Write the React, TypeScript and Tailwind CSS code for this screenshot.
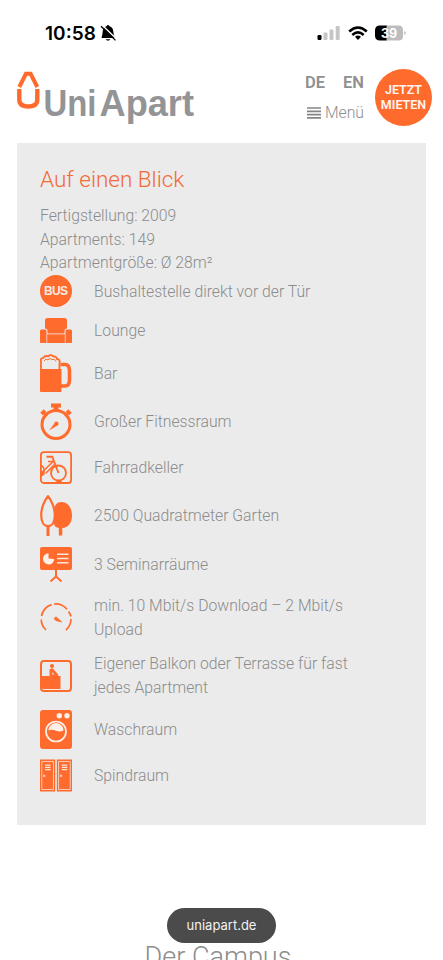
import type { ReactNode } from "react";

const BusIcon = () => (
  <svg viewBox="0 0 32 32" className="h-8 w-8">
    <circle cx="16" cy="16" r="16" fill="#ff6b2c" />
    <text
      x="16"
      y="20.4"
      textAnchor="middle"
      textLength="24"
      className="fill-[#f7eae4] font-['Liberation_Sans',sans-serif] text-[12px] font-bold"
    >
      BUS
    </text>
  </svg>
);

const LoungeIcon = () => (
  <svg viewBox="0 0 32 25" className="h-[25px] w-8" fill="#ff6b2c">
    <path d="M5 10.500V2.500Q5 0 7.500 0H24.500Q27 0 27 2.500V10.500Q24.500 10.500 24.500 12.500V15.500H7.500V12.500Q7.500 10.500 5 10.500Z" />
    <path d="M0 13Q0 11.500 1.500 11.500H5Q6.500 11.500 6.500 13V25H0.800Q0 25 0 24.200Z" />
    <path d="M32 13Q32 11.500 30.500 11.500H27Q25.500 11.500 25.500 13V25H31.200Q32 25 32 24.200Z" />
    <path d="M7.200 16.300H24.800V25H7.200Z" />
  </svg>
);

const BarIcon = () => (
  <svg viewBox="0 0 32 38" className="h-[38px] w-8" fill="none" stroke="#ff6b2c">
    <path
      d="M1 16V7.500Q0 4 3.500 3.800Q5 1 8 2.500Q11-0.500 13.500 2.600Q16.500 2 17 5Q20.500 5.500 19.500 9V16"
      strokeWidth="1.800"
    />
    <path d="M4 7Q6 3.500 8 6Q9 3 12 5.500Q15 4.500 16 7.500" strokeWidth="1" />
    <path d="M20.500 10.500H25Q29.500 10.500 29.500 17V26Q29.500 32 25 32H20.500" strokeWidth="3.600" />
    <path d="M0 15H21.500V37Q21.500 38 20.500 38H1Q0 38 0 37Z" fill="#ff6b2c" stroke="none" />
  </svg>
);

const StopwatchIcon = () => (
  <svg viewBox="0 0 32 37" className="h-[37px] w-8" fill="none" stroke="#ff6b2c">
    <circle cx="16" cy="21.500" r="14" strokeWidth="3" />
    <path d="M11 0.500H21V4.500H18.500V8H13.500V4.500H11Z" fill="#ff6b2c" stroke="none" />
    <path d="M1.500 11L5 7.500M30.500 11L27 7.500" strokeWidth="3.600" />
    <path d="M3 9L7 13M29 9L25 13" strokeWidth="2" />
    <path d="M9 27.500L14.200 20.700A2.200 2.200 0 1 1 16.600 23Z" fill="#ff6b2c" stroke="none" />
  </svg>
);

const BikeIcon = () => (
  <svg viewBox="0 0 32 33" className="h-[33px] w-8" fill="none" stroke="#ff6b2c">
    <rect x="0.900" y="1.200" width="30.200" height="30.800" rx="3" strokeWidth="1.800" />
    <circle cx="18.500" cy="22" r="7.500" strokeWidth="1.800" />
    <path d="M6.500 5.700H12.200L18.500 22" strokeWidth="1.900" />
    <path d="M12.800 10.800L3 20.500M8 10.500H13.500M14.500 13.500L5.500 22.500" strokeWidth="1.500" />
    <path d="M1 14.500Q4.500 16 4 20Q4 23 1 25.500" strokeWidth="1.500" />
    <path d="M1 20H4.500V24L1 25Z" fill="#ff6b2c" stroke="none" />
    <path d="M16 30.500Q19 28.500 22 30.500V32H16Z" fill="#ff6b2c" stroke="none" />
  </svg>
);

const GardenIcon = () => (
  <svg viewBox="0 0 32 41" className="h-[41px] w-8" fill="none" stroke="#ff6b2c">
    <path
      d="M21.500 7C28 7 32 13 32 20.500S28 33 22.300 33V40.500H18.800V33C13 32 13.500 27 13.500 20S15 7 21.500 7Z"
      fill="#ff6b2c"
      stroke="none"
    />
    <path d="M8 31V41" strokeWidth="3" />
    <path
      d="M8 1.200C10.500 4 14.800 12 14.800 20C14.800 27 12 31.200 8 31.200S1.200 27 1.200 20C1.200 12 5.500 4 8 1.200Z"
      fill="#ebebeb"
      strokeWidth="2.200"
    />
  </svg>
);

const SeminarIcon = () => (
  <svg viewBox="0 0 32 35" className="h-[35px] w-8">
    <rect width="32" height="23" rx="2" fill="#ff6b2c" />
    <path d="M8.500 6.300A5.600 5.600 0 1 0 14.200 12L8.500 11.500Z" fill="#fff0ea" />
    <path d="M17 7.200H28.500M17 11.500H28.500M17 15.800H28.500" stroke="#f9e5dc" strokeWidth="1.400" />
    <path d="M16 23V29.500M10.500 34.500L16 29.500L21.500 34.500" stroke="#ff6b2c" strokeWidth="2" fill="none" />
  </svg>
);

const SpeedIcon = () => (
  <svg viewBox="0 0 32 30" className="h-[30px] w-8" fill="none" stroke="#ff6b2c">
    <path d="M6 28A15 15 0 0 1 1.200 17.500" strokeWidth="1.700" />
    <path d="M1.500 14A15 15 0 0 1 11.700 2.600" strokeWidth="1.700" />
    <path d="M14 2A15 15 0 0 1 27 7.200" strokeWidth="1.700" />
    <path d="M28.500 9.500A15 15 0 0 1 31 14.500" strokeWidth="1.700" />
    <path d="M31 17A15 15 0 0 1 26 28" strokeWidth="1.700" />
    <path d="M14 16.500L16 14.800L22 20L16 18.700Z" fill="#ff6b2c" strokeWidth="0.600" />
  </svg>
);

const BalconyIcon = () => (
  <svg viewBox="0 0 32 32" className="h-8 w-8" fill="#ff6b2c">
    <rect x="1" y="1" width="30" height="30" rx="3" fill="none" stroke="#ff6b2c" strokeWidth="2" />
    <path d="M1 16H20.500V29H3.500Q1 29 1 27Z" />
    <circle cx="12" cy="6" r="2.100" />
    <path d="M9.500 10Q9.500 8.500 11.500 8.500H13L18.500 15L17.800 16.500H9.500Z" />
    <path d="M14.200 14.500L12.300 11.800V14.500Z" fill="#ebebeb" />
  </svg>
);

const WasherIcon = () => (
  <svg viewBox="0 0 32 39" className="h-[39px] w-8">
    <rect width="32" height="39" rx="3" fill="#ff6b2c" />
    <circle cx="19.300" cy="5.800" r="2.700" fill="#fff0ea" />
    <circle cx="27" cy="5.800" r="2.700" fill="#fff0ea" />
    <circle cx="16" cy="21.500" r="10" fill="none" stroke="#fff0ea" strokeWidth="1.700" />
    <path d="M8.500 20.500A7.500 7.500 0 0 1 23.500 20.500Q20 22.500 16 20.800T8.500 20.500Z" fill="#fff0ea" />
  </svg>
);

const LockerIcon = () => (
  <svg viewBox="0 0 32 33" className="h-[33px] w-8">
    {[0, 16.8].map((x) => (
      <g key={x} transform={`translate(${x} 0)`}>
        <rect y="0.500" width="15.200" height="32" fill="#ff6b2c" />
        <rect x="1.800" y="2.600" width="11.600" height="27.800" fill="none" stroke="#f6d5c7" strokeWidth="0.900" />
        <path d="M5 6.200H10.500M5 8.400H10.500M5 10.600H10.500" stroke="#fbe5dc" strokeWidth="1.200" />
        <path d="M4 15.500V18M3.500 17H5.500" stroke="#fbe5dc" strokeWidth="1" />
      </g>
    ))}
  </svg>
);

interface Feature {
  icon: ReactNode;
  label: string;
  height: string;
}

const features: Feature[] = [
  { icon: <BusIcon />, label: "Bushaltestelle direkt vor der Tür", height: "h-8" },
  { icon: <LoungeIcon />, label: "Lounge", height: "h-[25px]" },
  { icon: <BarIcon />, label: "Bar", height: "h-[38px]" },
  { icon: <StopwatchIcon />, label: "Großer Fitnessraum", height: "h-[37px]" },
  { icon: <BikeIcon />, label: "Fahrradkeller", height: "h-[33px]" },
  { icon: <GardenIcon />, label: "2500 Quadratmeter Garten", height: "h-[41px]" },
  { icon: <SeminarIcon />, label: "3 Seminarräume", height: "h-[35px]" },
  { icon: <SpeedIcon />, label: "min. 10 Mbit/s Download – 2 Mbit/s Upload", height: "h-12" },
  { icon: <BalconyIcon />, label: "Eigener Balkon oder Terrasse für fast jedes Apartment", height: "h-[47px]" },
  { icon: <WasherIcon />, label: "Waschraum", height: "h-[38px]" },
  { icon: <LockerIcon />, label: "Spindraum", height: "h-[33px]" },
];

const StatusBar = () => (
  <div className="flex h-[66px] items-center pl-[45px] pr-[37px] font-['Inter',sans-serif]">
    <svg viewBox="0 0 72 24" className="h-6 w-[72px]">
      <text x="0" y="19" textLength="51" className="text-[19px] font-semibold">
        10:58
      </text>
      <path d="M56.500 17Q57.500 13.500 57.700 10.500Q58 6 61.500 5.200Q63 3 64.500 5.200Q68 6 68.300 10.500Q68.500 14 70.200 17ZM60.500 18.300H65.500Q63 21 60.500 18.300Z" />
      <path d="M56.800 3.800L71.800 18.200" stroke="#fff" strokeWidth="1.400" />
      <path d="M56 5.200L70.500 19.400" stroke="#000" strokeWidth="1.300" />
    </svg>
    <div className="ml-auto flex items-center">
      <svg viewBox="0 0 23 16" className="h-4 w-[23px]" fill="#c5c5c5">
        <rect x="0.500" y="10" width="4" height="5" rx="1.200" fill="#000" />
        <rect x="6.500" y="7.500" width="4" height="7.500" rx="1.200" />
        <rect x="12.500" y="4.500" width="4" height="10.500" rx="1.200" />
        <rect x="18.700" y="1" width="4" height="14" rx="1.200" />
      </svg>
      <svg viewBox="0 0 20 15" className="ml-2 h-[15px] w-5" fill="none" stroke="#000" strokeWidth="2.500">
        <path d="M1.200 5.500Q10-2.500 18.800 5.500" />
        <path d="M4.300 9Q10 3.800 15.700 9" />
        <path d="M7 10.800Q10 8.300 13 10.800L10 14Z" fill="#000" stroke="none" />
      </svg>
      <svg viewBox="0 0 32 16" className="-mr-px ml-[7px] h-4 w-8">
        <path d="M5 0.500H12V15.500H5Q0 15.500 0 10.500V5.500Q0 0.500 5 0.500Z" />
        <path d="M11.500 0.500H23.500Q28 0.500 28 5V11Q28 15.500 23.500 15.500H11.500Z" fill="#bdbdbd" />
        <path d="M29.200 6Q30.800 6.500 30.800 8T29.200 10Z" fill="#bdbdbd" />
        <text x="14" y="12.500" textAnchor="middle" className="fill-white text-[12.500px] font-bold">
          39
        </text>
      </svg>
    </div>
  </div>
);

const Logo = () => (
  <svg viewBox="0 0 180 56" className="h-14 w-[180px]">
    <path d="M2.300 16L8.900 2.800H13.600L20.300 16" fill="none" stroke="#ff6b2c" strokeWidth="4" />
    <path
      d="M2.300 18V28.500Q2.300 35.500 11.300 35.500T20.300 28.500V18"
      fill="none"
      stroke="#ff6b2c"
      strokeWidth="4.400"
    />
    <g className="fill-[#929496] font-['Liberation_Sans',sans-serif] text-[36.5px] font-bold">
      <text x="26.500" y="45" textLength="53" lengthAdjust="spacingAndGlyphs">
        Uni
      </text>
      <text x="82.500" y="45" textLength="94.500" lengthAdjust="spacingAndGlyphs">
        Apart
      </text>
    </g>
  </svg>
);

const Header = () => (
  <header className="flex h-[77px] items-start pl-[17px] pr-[11px]">
    <div className="pt-[5px]">
      <Logo />
    </div>
    <div className="ml-auto flex w-[59px] flex-col pt-[5px] text-[#8f8f8f]">
      <div className="flex justify-between text-[16.5px] font-semibold leading-6">
        <span>DE</span>
        <span>EN</span>
      </div>
      <div className="mt-1.5 flex items-center justify-between text-[15.75px] font-light leading-6">
        <svg viewBox="0 0 14 12" className="ml-0.5 h-3 w-3.5" stroke="#858585" strokeWidth="1.700">
          <path d="M0 1H14M0 4.300H14M0 7.600H14M0 10.900H14" />
        </svg>
        <span>Menü</span>
      </div>
    </div>
    <div className="ml-[11px] mt-[3px] flex size-[57px] flex-col items-center justify-center rounded-full bg-[#ff6b2c] pb-0.5 text-[12.5px] font-semibold leading-[15px] text-[#fff5f0]">
      <span>JETZT</span>
      <span>MIETEN</span>
    </div>
  </header>
);

export default function App() {
  return (
    <div className="flex h-[960px] w-[443px] flex-col overflow-hidden bg-white font-['Roboto',sans-serif] text-[#8c8c8c]">
      <StatusBar />
      <Header />
      <section className="mx-[17px] h-[682px] shrink-0 bg-[#ebebeb] pl-[23px] pt-[22px]">
        <h2 className="text-[22.5px] font-light leading-7 text-[#f26a35]">Auf einen Blick</h2>
        <div className="mt-[11px] text-[15.75px] font-light leading-[23.700px]">
          <p>Fertigstellung: 2009</p>
          <p>Apartments: 149</p>
          <p>Apartmentgröße: Ø 28m²</p>
        </div>
        <ul className="flex flex-col gap-[11px]">
          {features.map((feature) => (
            <li key={feature.label} className={`flex items-center gap-[22px] ${feature.height}`}>
              <span className="shrink-0">{feature.icon}</span>
              <span className="w-[270px] pt-px text-[15.75px] font-light leading-6">{feature.label}</span>
            </li>
          ))}
        </ul>
      </section>
      <div className="relative mt-auto h-[22px] shrink-0">
        <h2 className="pr-[7px] pt-px text-center text-[27px] font-light leading-9">Der Campus</h2>
        <div className="absolute -top-[30px] left-[167px] flex h-[35px] w-[109px] items-center justify-center rounded-full bg-[#4b4b4b] font-['Inter',sans-serif] text-[13px] text-[#f2f2f2]">
          uniapart.de
        </div>
      </div>
    </div>
  );
}
